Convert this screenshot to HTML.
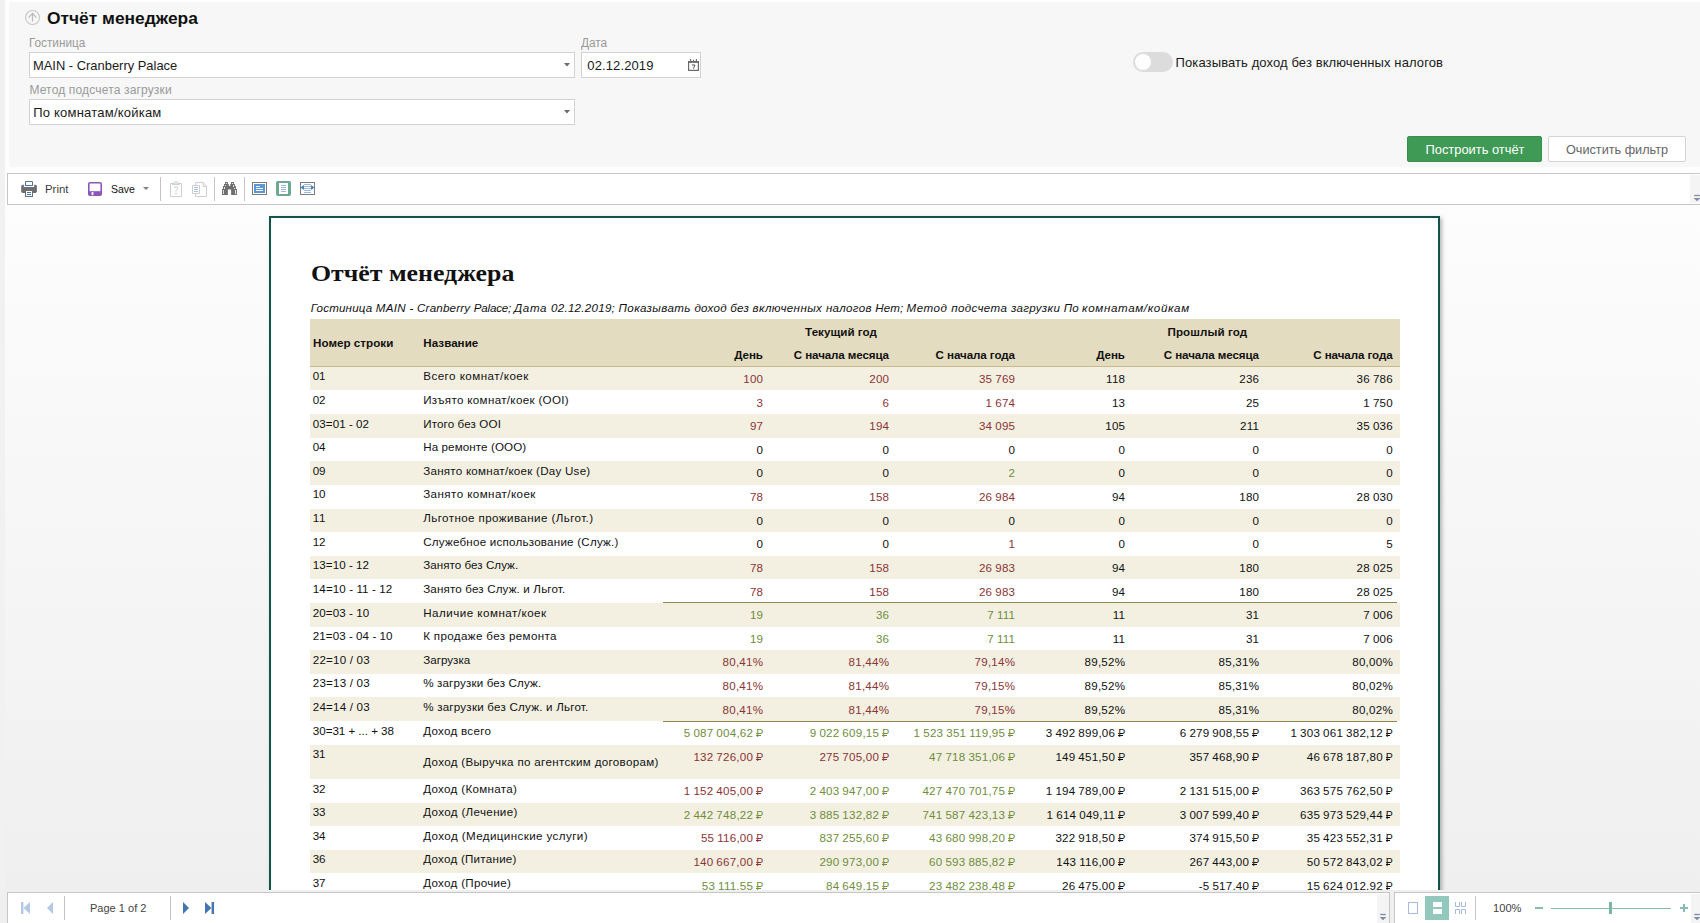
<!DOCTYPE html>
<html lang="ru"><head><meta charset="utf-8"><title>Отчёт менеджера</title>
<style>
html,body{margin:0;padding:0;}
body{width:1700px;height:923px;overflow:hidden;position:relative;background:#f1f1f1;font-family:"Liberation Sans",sans-serif;}
.t{position:absolute;white-space:nowrap;margin:0;padding:0;}
.b{position:absolute;box-sizing:border-box;}
svg{position:absolute;overflow:visible;}
.r{display:inline-block;position:relative;font-size:10.6px;line-height:16px;letter-spacing:0;word-spacing:0;}
.r::after{content:"";position:absolute;left:-0.2px;top:10px;width:4.8px;height:1px;background:currentColor;}
.r::before{content:"";position:absolute;left:-0.2px;top:8px;width:1.3px;height:1px;background:currentColor;opacity:.75;}
</style></head><body>

<div class="b" style="left:5px;top:0px;width:1695px;height:174px;background:#fefefe;"></div>
<div class="b" style="left:9px;top:2px;width:1691px;height:165px;background:#f7f7f7;border-radius:2px 0 0 3px;"></div>
<svg style="left:25px;top:10px" width="15" height="15" viewBox="0 0 15 15"><circle cx="7.5" cy="7.5" r="7" fill="none" stroke="#c6c6c6" stroke-width="1.1"/><path d="M7.5 11.6V3.4M3.6 7.6 7.5 3.4 11.4 7.6" fill="none" stroke="#b9b9b9" stroke-width="1.2"/></svg>
<div class="t" style="top:7px;font-size:17px;line-height:23px;color:#111;font-weight:700;left:46.6px;transform:scaleX(1.022);transform-origin:0 0;">Отчёт менеджера</div>
<div class="t" style="top:34px;font-size:12px;line-height:18px;color:#9a9a9a;left:29.4px;transform:scaleX(0.978);transform-origin:0 0;">Гостиница</div>
<div class="t" style="top:34px;font-size:12px;line-height:18px;color:#9a9a9a;left:581.2px;transform:scaleX(0.986);transform-origin:0 0;">Дата</div>
<div class="t" style="top:81px;font-size:12px;line-height:18px;color:#9a9a9a;letter-spacing:0.16px;left:29.4px;">Метод подсчета загрузки</div>
<div class="b" style="left:29px;top:52px;width:546px;height:26px;background:#fff;border:1px solid #d2d2d2;"></div>
<div class="b" style="left:581px;top:52px;width:120px;height:26px;background:#fff;border:1px solid #d2d2d2;"></div>
<div class="b" style="left:29px;top:99px;width:546px;height:26px;background:#fff;border:1px solid #d2d2d2;"></div>
<div class="t" style="top:56px;font-size:13px;line-height:19px;color:#1a1a1a;left:33.2px;transform:scaleX(0.993);transform-origin:0 0;">MAIN - Cranberry Palace</div>
<div class="t" style="top:103px;font-size:13px;line-height:19px;color:#1a1a1a;letter-spacing:0.22px;left:33.2px;">По комнатам/койкам</div>
<div class="t" style="top:56px;font-size:13px;line-height:19px;color:#1a1a1a;letter-spacing:0.12px;left:587.3px;">02.12.2019</div>
<svg style="left:564px;top:63px" width="6" height="4" viewBox="0 0 6 4"><path d="M0 0H6L3 3.6Z" fill="#6a6a6a"/></svg>
<svg style="left:564px;top:110px" width="6" height="4" viewBox="0 0 6 4"><path d="M0 0H6L3 3.6Z" fill="#6a6a6a"/></svg>
<svg style="left:688px;top:59px" width="11" height="12" viewBox="0 0 11 12"><path d="M.6 2.6H10.4V11.4H.6Z" fill="#fff" stroke="#6c6c6c" stroke-width="1.2"/><path d="M.6 3.2H10.4" stroke="#6c6c6c" stroke-width="1.4"/><path d="M2.6 0V2.6M5.5 .8V2.6M8.4 0V2.6" stroke="#6c6c6c" stroke-width="1.1"/><path d="M3.9 6H7L5.4 9.7" fill="none" stroke="#555" stroke-width="1"/></svg>
<div class="b" style="left:1133px;top:52px;width:40px;height:20px;background:#dcdcdc;border-radius:10px;"></div>
<div class="b" style="left:1135px;top:54px;width:16px;height:16px;background:#fdfdfd;border-radius:8px;"></div>
<div class="t" style="top:53px;font-size:13px;line-height:19px;color:#1a1a1a;letter-spacing:0.1px;left:1175.6px;">Показывать доход без включенных налогов</div>
<div class="b" style="left:1407px;top:136px;width:135px;height:26px;background:#3f9a55;border-radius:2px;border:1px solid #3a8f4e;"></div>
<div class="t" style="top:140px;font-size:13px;line-height:19px;color:#fff;left:1274.6px;width:400px;text-align:center;transform:scaleX(0.99);transform-origin:50% 0;">Построить отчёт</div>
<div class="b" style="left:1548px;top:136px;width:138px;height:26px;background:#fff;border-radius:2px;border:1px solid #d4d4d4;"></div>
<div class="t" style="top:140px;font-size:13px;line-height:19px;color:#666;left:1417px;width:400px;text-align:center;transform:scaleX(0.975);transform-origin:50% 0;">Очистить фильтр</div>
<div class="b" style="left:5px;top:173px;width:1695px;height:717px;background:linear-gradient(#fdfdfd,#fcfcfc 8%,#efefef 100%);"></div>
<div class="b" style="left:269px;top:216px;width:1171px;height:700px;background:#fff;border:2px solid #11544b;box-shadow:2px 2px 4px rgba(0,0,0,.28);"></div>
<div class="t" style="top:258px;font-size:23.2px;line-height:30px;color:#111;font-weight:700;font-family:'Liberation Serif',serif;left:311.4px;transform:scaleX(1.1144);transform-origin:0 0;">Отчёт менеджера</div>
<div class="t" style="top:299px;font-size:11.6px;line-height:17px;color:#111;font-style:italic;letter-spacing:0.16px;left:310.8px;">Гостиница</div>
<div class="t" style="top:299px;font-size:11.6px;line-height:17px;color:#111;font-style:italic;letter-spacing:0.335px;left:375.7px;">MAIN</div>
<div class="t" style="top:299px;font-size:11.6px;line-height:17px;color:#111;font-style:italic;letter-spacing:0.157px;left:409.6px;">-</div>
<div class="t" style="top:299px;font-size:11.6px;line-height:17px;color:#111;font-style:italic;letter-spacing:0.2px;left:417.0px;">Cranberry</div>
<div class="t" style="top:299px;font-size:11.6px;line-height:17px;color:#111;font-style:italic;letter-spacing:-0.214px;left:473.8px;">Palace;</div>
<div class="t" style="top:299px;font-size:11.6px;line-height:17px;color:#111;font-style:italic;letter-spacing:0.635px;left:514.0px;">Дата</div>
<div class="t" style="top:299px;font-size:11.6px;line-height:17px;color:#111;font-style:italic;letter-spacing:0.258px;left:551.0px;">02.12.2019;</div>
<div class="t" style="top:299px;font-size:11.6px;line-height:17px;color:#111;font-style:italic;letter-spacing:0.373px;left:618.6px;">Показывать</div>
<div class="t" style="top:299px;font-size:11.6px;line-height:17px;color:#111;font-style:italic;letter-spacing:0.256px;left:694.4px;">доход</div>
<div class="t" style="top:299px;font-size:11.6px;line-height:17px;color:#111;font-style:italic;letter-spacing:0.21px;left:730.3px;">без</div>
<div class="t" style="top:299px;font-size:11.6px;line-height:17px;color:#111;font-style:italic;letter-spacing:0.386px;left:752.6px;">включенных</div>
<div class="t" style="top:299px;font-size:11.6px;line-height:17px;color:#111;font-style:italic;letter-spacing:0.298px;left:825.9px;">налогов</div>
<div class="t" style="top:299px;font-size:11.6px;line-height:17px;color:#111;font-style:italic;letter-spacing:0.079px;left:875.3px;">Нет;</div>
<div class="t" style="top:299px;font-size:11.6px;line-height:17px;color:#111;font-style:italic;letter-spacing:0.516px;left:906.5px;">Метод</div>
<div class="t" style="top:299px;font-size:11.6px;line-height:17px;color:#111;font-style:italic;letter-spacing:0.39px;left:951.2px;">подсчета</div>
<div class="t" style="top:299px;font-size:11.6px;line-height:17px;color:#111;font-style:italic;letter-spacing:0.339px;left:1010.9px;">загрузки</div>
<div class="t" style="top:299px;font-size:11.6px;line-height:17px;color:#111;font-style:italic;letter-spacing:0.073px;left:1063.8px;">По</div>
<div class="t" style="top:299px;font-size:11.6px;line-height:17px;color:#111;font-style:italic;letter-spacing:0.64px;left:1082.1px;">комнатам/койкам</div>
<div class="b" style="left:310px;top:319px;width:1090px;height:48px;background:#e4dcc0;border-bottom:1px solid #c9ba8e;"></div>
<div class="t" style="top:334px;font-size:11.6px;line-height:17px;color:#111;font-weight:700;letter-spacing:0.037px;left:313px;">Номер строки</div>
<div class="t" style="top:334px;font-size:11.6px;line-height:17px;color:#111;font-weight:700;letter-spacing:0.035px;left:423.3px;">Название</div>
<div class="t" style="top:323px;font-size:11.6px;line-height:17px;color:#111;font-weight:700;letter-spacing:0.034px;left:641px;width:400px;text-align:center;">Текущий год</div>
<div class="t" style="top:323px;font-size:11.6px;line-height:17px;color:#111;font-weight:700;letter-spacing:0.072px;left:1007.3px;width:400px;text-align:center;">Прошлый год</div>
<div class="t" style="top:346px;font-size:11.6px;line-height:17px;color:#111;font-weight:700;letter-spacing:-0.098px;right:937.10px;text-align:right;">День</div>
<div class="t" style="top:346px;font-size:11.6px;line-height:17px;color:#111;font-weight:700;letter-spacing:-0.116px;right:811.12px;text-align:right;">С начала месяца</div>
<div class="t" style="top:346px;font-size:11.6px;line-height:17px;color:#111;font-weight:700;letter-spacing:-0.077px;right:685.08px;text-align:right;">С начала года</div>
<div class="t" style="top:346px;font-size:11.6px;line-height:17px;color:#111;font-weight:700;letter-spacing:-0.098px;right:575.10px;text-align:right;">День</div>
<div class="t" style="top:346px;font-size:11.6px;line-height:17px;color:#111;font-weight:700;letter-spacing:-0.116px;right:441.12px;text-align:right;">С начала месяца</div>
<div class="t" style="top:346px;font-size:11.6px;line-height:17px;color:#111;font-weight:700;letter-spacing:-0.077px;right:307.38px;text-align:right;">С начала года</div>
<div class="b" style="left:310px;top:367px;width:1090px;height:23px;background:#f3f0e2;"></div>
<div class="t" style="top:367px;font-size:11.6px;line-height:17px;color:#111;letter-spacing:-0.303px;left:312.8px;">01</div>
<div class="t" style="top:367px;font-size:11.6px;line-height:17px;color:#111;letter-spacing:0.475px;left:423.2px;">Всего комнат/коек</div>
<div class="t" style="top:370px;font-size:11.6px;line-height:17px;color:#8c3434;letter-spacing:0.22px;right:936.78px;text-align:right;">100</div>
<div class="t" style="top:370px;font-size:11.6px;line-height:17px;color:#8c3434;letter-spacing:0.22px;right:810.78px;text-align:right;">200</div>
<div class="t" style="top:370px;font-size:11.6px;line-height:17px;color:#8c3434;letter-spacing:0.22px;right:684.78px;text-align:right;word-spacing:-0.45px;">35 769</div>
<div class="t" style="top:370px;font-size:11.6px;line-height:17px;color:#111;letter-spacing:0.22px;right:574.78px;text-align:right;">118</div>
<div class="t" style="top:370px;font-size:11.6px;line-height:17px;color:#111;letter-spacing:0.22px;right:440.78px;text-align:right;">236</div>
<div class="t" style="top:370px;font-size:11.6px;line-height:17px;color:#111;letter-spacing:0.22px;right:307.08px;text-align:right;word-spacing:-0.45px;">36 786</div>
<div class="t" style="top:391px;font-size:11.6px;line-height:17px;color:#111;letter-spacing:-0.303px;left:312.8px;">02</div>
<div class="t" style="top:391px;font-size:11.6px;line-height:17px;color:#111;letter-spacing:0.332px;left:423.2px;">Изъято комнат/коек (OOI)</div>
<div class="t" style="top:394px;font-size:11.6px;line-height:17px;color:#8c3434;letter-spacing:0.22px;right:936.78px;text-align:right;">3</div>
<div class="t" style="top:394px;font-size:11.6px;line-height:17px;color:#8c3434;letter-spacing:0.22px;right:810.78px;text-align:right;">6</div>
<div class="t" style="top:394px;font-size:11.6px;line-height:17px;color:#8c3434;letter-spacing:0.22px;right:684.78px;text-align:right;word-spacing:-0.45px;">1 674</div>
<div class="t" style="top:394px;font-size:11.6px;line-height:17px;color:#111;letter-spacing:0.22px;right:574.78px;text-align:right;">13</div>
<div class="t" style="top:394px;font-size:11.6px;line-height:17px;color:#111;letter-spacing:0.22px;right:440.78px;text-align:right;">25</div>
<div class="t" style="top:394px;font-size:11.6px;line-height:17px;color:#111;letter-spacing:0.22px;right:307.08px;text-align:right;word-spacing:-0.45px;">1 750</div>
<div class="b" style="left:310px;top:414px;width:1090px;height:24px;background:#f3f0e2;"></div>
<div class="t" style="top:415px;font-size:11.6px;line-height:17px;color:#111;letter-spacing:0.056px;left:312.8px;">03=01 - 02</div>
<div class="t" style="top:415px;font-size:11.6px;line-height:17px;color:#111;letter-spacing:0.13px;left:423.2px;">Итого без OOI</div>
<div class="t" style="top:417px;font-size:11.6px;line-height:17px;color:#8c3434;letter-spacing:0.22px;right:936.78px;text-align:right;">97</div>
<div class="t" style="top:417px;font-size:11.6px;line-height:17px;color:#8c3434;letter-spacing:0.22px;right:810.78px;text-align:right;">194</div>
<div class="t" style="top:417px;font-size:11.6px;line-height:17px;color:#8c3434;letter-spacing:0.22px;right:684.78px;text-align:right;word-spacing:-0.45px;">34 095</div>
<div class="t" style="top:417px;font-size:11.6px;line-height:17px;color:#111;letter-spacing:0.22px;right:574.78px;text-align:right;">105</div>
<div class="t" style="top:417px;font-size:11.6px;line-height:17px;color:#111;letter-spacing:0.22px;right:440.78px;text-align:right;">211</div>
<div class="t" style="top:417px;font-size:11.6px;line-height:17px;color:#111;letter-spacing:0.22px;right:307.08px;text-align:right;word-spacing:-0.45px;">35 036</div>
<div class="t" style="top:438px;font-size:11.6px;line-height:17px;color:#111;letter-spacing:-0.303px;left:312.8px;">04</div>
<div class="t" style="top:438px;font-size:11.6px;line-height:17px;color:#111;letter-spacing:0.104px;left:423.2px;">На ремонте (OOO)</div>
<div class="t" style="top:441px;font-size:11.6px;line-height:17px;color:#111;letter-spacing:0.22px;right:936.78px;text-align:right;">0</div>
<div class="t" style="top:441px;font-size:11.6px;line-height:17px;color:#111;letter-spacing:0.22px;right:810.78px;text-align:right;">0</div>
<div class="t" style="top:441px;font-size:11.6px;line-height:17px;color:#111;letter-spacing:0.22px;right:684.78px;text-align:right;">0</div>
<div class="t" style="top:441px;font-size:11.6px;line-height:17px;color:#111;letter-spacing:0.22px;right:574.78px;text-align:right;">0</div>
<div class="t" style="top:441px;font-size:11.6px;line-height:17px;color:#111;letter-spacing:0.22px;right:440.78px;text-align:right;">0</div>
<div class="t" style="top:441px;font-size:11.6px;line-height:17px;color:#111;letter-spacing:0.22px;right:307.08px;text-align:right;">0</div>
<div class="b" style="left:310px;top:461px;width:1090px;height:24px;background:#f3f0e2;"></div>
<div class="t" style="top:462px;font-size:11.6px;line-height:17px;color:#111;letter-spacing:-0.303px;left:312.8px;">09</div>
<div class="t" style="top:462px;font-size:11.6px;line-height:17px;color:#111;letter-spacing:0.249px;left:423.2px;">Занято комнат/коек (Day Use)</div>
<div class="t" style="top:464px;font-size:11.6px;line-height:17px;color:#111;letter-spacing:0.22px;right:936.78px;text-align:right;">0</div>
<div class="t" style="top:464px;font-size:11.6px;line-height:17px;color:#111;letter-spacing:0.22px;right:810.78px;text-align:right;">0</div>
<div class="t" style="top:464px;font-size:11.6px;line-height:17px;color:#6f8d3c;letter-spacing:0.22px;right:684.78px;text-align:right;">2</div>
<div class="t" style="top:464px;font-size:11.6px;line-height:17px;color:#111;letter-spacing:0.22px;right:574.78px;text-align:right;">0</div>
<div class="t" style="top:464px;font-size:11.6px;line-height:17px;color:#111;letter-spacing:0.22px;right:440.78px;text-align:right;">0</div>
<div class="t" style="top:464px;font-size:11.6px;line-height:17px;color:#111;letter-spacing:0.22px;right:307.08px;text-align:right;">0</div>
<div class="t" style="top:485px;font-size:11.6px;line-height:17px;color:#111;letter-spacing:-0.303px;left:312.8px;">10</div>
<div class="t" style="top:485px;font-size:11.6px;line-height:17px;color:#111;letter-spacing:0.426px;left:423.2px;">Занято комнат/коек</div>
<div class="t" style="top:488px;font-size:11.6px;line-height:17px;color:#8c3434;letter-spacing:0.22px;right:936.78px;text-align:right;">78</div>
<div class="t" style="top:488px;font-size:11.6px;line-height:17px;color:#8c3434;letter-spacing:0.22px;right:810.78px;text-align:right;">158</div>
<div class="t" style="top:488px;font-size:11.6px;line-height:17px;color:#8c3434;letter-spacing:0.22px;right:684.78px;text-align:right;word-spacing:-0.45px;">26 984</div>
<div class="t" style="top:488px;font-size:11.6px;line-height:17px;color:#111;letter-spacing:0.22px;right:574.78px;text-align:right;">94</div>
<div class="t" style="top:488px;font-size:11.6px;line-height:17px;color:#111;letter-spacing:0.22px;right:440.78px;text-align:right;">180</div>
<div class="t" style="top:488px;font-size:11.6px;line-height:17px;color:#111;letter-spacing:0.22px;right:307.08px;text-align:right;word-spacing:-0.45px;">28 030</div>
<div class="b" style="left:310px;top:509px;width:1090px;height:23px;background:#f3f0e2;"></div>
<div class="t" style="top:509px;font-size:11.6px;line-height:17px;color:#111;letter-spacing:0.558px;left:312.8px;">11</div>
<div class="t" style="top:509px;font-size:11.6px;line-height:17px;color:#111;letter-spacing:0.414px;left:423.2px;">Льготное проживание (Льгот.)</div>
<div class="t" style="top:512px;font-size:11.6px;line-height:17px;color:#111;letter-spacing:0.22px;right:936.78px;text-align:right;">0</div>
<div class="t" style="top:512px;font-size:11.6px;line-height:17px;color:#111;letter-spacing:0.22px;right:810.78px;text-align:right;">0</div>
<div class="t" style="top:512px;font-size:11.6px;line-height:17px;color:#111;letter-spacing:0.22px;right:684.78px;text-align:right;">0</div>
<div class="t" style="top:512px;font-size:11.6px;line-height:17px;color:#111;letter-spacing:0.22px;right:574.78px;text-align:right;">0</div>
<div class="t" style="top:512px;font-size:11.6px;line-height:17px;color:#111;letter-spacing:0.22px;right:440.78px;text-align:right;">0</div>
<div class="t" style="top:512px;font-size:11.6px;line-height:17px;color:#111;letter-spacing:0.22px;right:307.08px;text-align:right;">0</div>
<div class="t" style="top:533px;font-size:11.6px;line-height:17px;color:#111;letter-spacing:-0.303px;left:312.8px;">12</div>
<div class="t" style="top:533px;font-size:11.6px;line-height:17px;color:#111;letter-spacing:0.231px;left:423.2px;">Служебное использование (Служ.)</div>
<div class="t" style="top:535px;font-size:11.6px;line-height:17px;color:#111;letter-spacing:0.22px;right:936.78px;text-align:right;">0</div>
<div class="t" style="top:535px;font-size:11.6px;line-height:17px;color:#111;letter-spacing:0.22px;right:810.78px;text-align:right;">0</div>
<div class="t" style="top:535px;font-size:11.6px;line-height:17px;color:#8c3434;letter-spacing:0.22px;right:684.78px;text-align:right;">1</div>
<div class="t" style="top:535px;font-size:11.6px;line-height:17px;color:#111;letter-spacing:0.22px;right:574.78px;text-align:right;">0</div>
<div class="t" style="top:535px;font-size:11.6px;line-height:17px;color:#111;letter-spacing:0.22px;right:440.78px;text-align:right;">0</div>
<div class="t" style="top:535px;font-size:11.6px;line-height:17px;color:#111;letter-spacing:0.22px;right:307.08px;text-align:right;">5</div>
<div class="b" style="left:310px;top:556px;width:1090px;height:23px;background:#f3f0e2;"></div>
<div class="t" style="top:556px;font-size:11.6px;line-height:17px;color:#111;letter-spacing:0.056px;left:312.8px;">13=10 - 12</div>
<div class="t" style="top:556px;font-size:11.6px;line-height:17px;color:#111;letter-spacing:0.046px;left:423.2px;">Занято без Служ.</div>
<div class="t" style="top:559px;font-size:11.6px;line-height:17px;color:#8c3434;letter-spacing:0.22px;right:936.78px;text-align:right;">78</div>
<div class="t" style="top:559px;font-size:11.6px;line-height:17px;color:#8c3434;letter-spacing:0.22px;right:810.78px;text-align:right;">158</div>
<div class="t" style="top:559px;font-size:11.6px;line-height:17px;color:#8c3434;letter-spacing:0.22px;right:684.78px;text-align:right;word-spacing:-0.45px;">26 983</div>
<div class="t" style="top:559px;font-size:11.6px;line-height:17px;color:#111;letter-spacing:0.22px;right:574.78px;text-align:right;">94</div>
<div class="t" style="top:559px;font-size:11.6px;line-height:17px;color:#111;letter-spacing:0.22px;right:440.78px;text-align:right;">180</div>
<div class="t" style="top:559px;font-size:11.6px;line-height:17px;color:#111;letter-spacing:0.22px;right:307.08px;text-align:right;word-spacing:-0.45px;">28 025</div>
<div class="t" style="top:580px;font-size:11.6px;line-height:17px;color:#111;letter-spacing:0.097px;left:312.8px;">14=10 - 11 - 12</div>
<div class="t" style="top:580px;font-size:11.6px;line-height:17px;color:#111;letter-spacing:0.158px;left:423.2px;">Занято без Служ. и Льгот.</div>
<div class="t" style="top:583px;font-size:11.6px;line-height:17px;color:#8c3434;letter-spacing:0.22px;right:936.78px;text-align:right;">78</div>
<div class="t" style="top:583px;font-size:11.6px;line-height:17px;color:#8c3434;letter-spacing:0.22px;right:810.78px;text-align:right;">158</div>
<div class="t" style="top:583px;font-size:11.6px;line-height:17px;color:#8c3434;letter-spacing:0.22px;right:684.78px;text-align:right;word-spacing:-0.45px;">26 983</div>
<div class="t" style="top:583px;font-size:11.6px;line-height:17px;color:#111;letter-spacing:0.22px;right:574.78px;text-align:right;">94</div>
<div class="t" style="top:583px;font-size:11.6px;line-height:17px;color:#111;letter-spacing:0.22px;right:440.78px;text-align:right;">180</div>
<div class="t" style="top:583px;font-size:11.6px;line-height:17px;color:#111;letter-spacing:0.22px;right:307.08px;text-align:right;word-spacing:-0.45px;">28 025</div>
<div class="b" style="left:310px;top:603px;width:1090px;height:24px;background:#f3f0e2;"></div>
<div class="t" style="top:604px;font-size:11.6px;line-height:17px;color:#111;letter-spacing:0.068px;left:312.8px;">20=03 - 10</div>
<div class="t" style="top:604px;font-size:11.6px;line-height:17px;color:#111;letter-spacing:0.487px;left:423.2px;">Наличие комнат/коек</div>
<div class="t" style="top:606px;font-size:11.6px;line-height:17px;color:#6f8d3c;letter-spacing:0.22px;right:936.78px;text-align:right;">19</div>
<div class="t" style="top:606px;font-size:11.6px;line-height:17px;color:#6f8d3c;letter-spacing:0.22px;right:810.78px;text-align:right;">36</div>
<div class="t" style="top:606px;font-size:11.6px;line-height:17px;color:#6f8d3c;letter-spacing:0.22px;right:684.78px;text-align:right;word-spacing:-0.45px;">7 111</div>
<div class="t" style="top:606px;font-size:11.6px;line-height:17px;color:#111;letter-spacing:0.22px;right:574.78px;text-align:right;">11</div>
<div class="t" style="top:606px;font-size:11.6px;line-height:17px;color:#111;letter-spacing:0.22px;right:440.78px;text-align:right;">31</div>
<div class="t" style="top:606px;font-size:11.6px;line-height:17px;color:#111;letter-spacing:0.22px;right:307.08px;text-align:right;word-spacing:-0.45px;">7 006</div>
<div class="b" style="left:663px;top:602px;width:733.5px;height:1px;background:#8f8750;"></div>
<div class="t" style="top:627px;font-size:11.6px;line-height:17px;color:#111;letter-spacing:0.057px;left:312.8px;">21=03 - 04 - 10</div>
<div class="t" style="top:627px;font-size:11.6px;line-height:17px;color:#111;letter-spacing:0.356px;left:423.2px;">К продаже без ремонта</div>
<div class="t" style="top:630px;font-size:11.6px;line-height:17px;color:#6f8d3c;letter-spacing:0.22px;right:936.78px;text-align:right;">19</div>
<div class="t" style="top:630px;font-size:11.6px;line-height:17px;color:#6f8d3c;letter-spacing:0.22px;right:810.78px;text-align:right;">36</div>
<div class="t" style="top:630px;font-size:11.6px;line-height:17px;color:#6f8d3c;letter-spacing:0.22px;right:684.78px;text-align:right;word-spacing:-0.45px;">7 111</div>
<div class="t" style="top:630px;font-size:11.6px;line-height:17px;color:#111;letter-spacing:0.22px;right:574.78px;text-align:right;">11</div>
<div class="t" style="top:630px;font-size:11.6px;line-height:17px;color:#111;letter-spacing:0.22px;right:440.78px;text-align:right;">31</div>
<div class="t" style="top:630px;font-size:11.6px;line-height:17px;color:#111;letter-spacing:0.22px;right:307.08px;text-align:right;word-spacing:-0.45px;">7 006</div>
<div class="b" style="left:310px;top:650px;width:1090px;height:24px;background:#f3f0e2;"></div>
<div class="t" style="top:651px;font-size:11.6px;line-height:17px;color:#111;letter-spacing:0.194px;left:312.8px;">22=10 / 03</div>
<div class="t" style="top:651px;font-size:11.6px;line-height:17px;color:#111;letter-spacing:0.027px;left:423.2px;">Загрузка</div>
<div class="t" style="top:653px;font-size:11.6px;line-height:17px;color:#8c3434;letter-spacing:0.22px;right:936.78px;text-align:right;">80,41%</div>
<div class="t" style="top:653px;font-size:11.6px;line-height:17px;color:#8c3434;letter-spacing:0.22px;right:810.78px;text-align:right;">81,44%</div>
<div class="t" style="top:653px;font-size:11.6px;line-height:17px;color:#8c3434;letter-spacing:0.22px;right:684.78px;text-align:right;">79,14%</div>
<div class="t" style="top:653px;font-size:11.6px;line-height:17px;color:#111;letter-spacing:0.22px;right:574.78px;text-align:right;">89,52%</div>
<div class="t" style="top:653px;font-size:11.6px;line-height:17px;color:#111;letter-spacing:0.22px;right:440.78px;text-align:right;">85,31%</div>
<div class="t" style="top:653px;font-size:11.6px;line-height:17px;color:#111;letter-spacing:0.22px;right:307.08px;text-align:right;">80,00%</div>
<div class="t" style="top:674px;font-size:11.6px;line-height:17px;color:#111;letter-spacing:0.194px;left:312.8px;">23=13 / 03</div>
<div class="t" style="top:674px;font-size:11.6px;line-height:17px;color:#111;letter-spacing:0.16px;left:423.2px;">% загрузки без Служ.</div>
<div class="t" style="top:677px;font-size:11.6px;line-height:17px;color:#8c3434;letter-spacing:0.22px;right:936.78px;text-align:right;">80,41%</div>
<div class="t" style="top:677px;font-size:11.6px;line-height:17px;color:#8c3434;letter-spacing:0.22px;right:810.78px;text-align:right;">81,44%</div>
<div class="t" style="top:677px;font-size:11.6px;line-height:17px;color:#8c3434;letter-spacing:0.22px;right:684.78px;text-align:right;">79,15%</div>
<div class="t" style="top:677px;font-size:11.6px;line-height:17px;color:#111;letter-spacing:0.22px;right:574.78px;text-align:right;">89,52%</div>
<div class="t" style="top:677px;font-size:11.6px;line-height:17px;color:#111;letter-spacing:0.22px;right:440.78px;text-align:right;">85,31%</div>
<div class="t" style="top:677px;font-size:11.6px;line-height:17px;color:#111;letter-spacing:0.22px;right:307.08px;text-align:right;">80,02%</div>
<div class="b" style="left:310px;top:697px;width:1090px;height:24px;background:#f3f0e2;"></div>
<div class="t" style="top:698px;font-size:11.6px;line-height:17px;color:#111;letter-spacing:0.194px;left:312.8px;">24=14 / 03</div>
<div class="t" style="top:698px;font-size:11.6px;line-height:17px;color:#111;letter-spacing:0.219px;left:423.2px;">% загрузки без Служ. и Льгот.</div>
<div class="t" style="top:701px;font-size:11.6px;line-height:17px;color:#8c3434;letter-spacing:0.22px;right:936.78px;text-align:right;">80,41%</div>
<div class="t" style="top:701px;font-size:11.6px;line-height:17px;color:#8c3434;letter-spacing:0.22px;right:810.78px;text-align:right;">81,44%</div>
<div class="t" style="top:701px;font-size:11.6px;line-height:17px;color:#8c3434;letter-spacing:0.22px;right:684.78px;text-align:right;">79,15%</div>
<div class="t" style="top:701px;font-size:11.6px;line-height:17px;color:#111;letter-spacing:0.22px;right:574.78px;text-align:right;">89,52%</div>
<div class="t" style="top:701px;font-size:11.6px;line-height:17px;color:#111;letter-spacing:0.22px;right:440.78px;text-align:right;">85,31%</div>
<div class="t" style="top:701px;font-size:11.6px;line-height:17px;color:#111;letter-spacing:0.22px;right:307.08px;text-align:right;">80,02%</div>
<div class="t" style="top:722px;font-size:11.6px;line-height:17px;color:#111;letter-spacing:-0.026px;left:312.8px;">30=31 + ... + 38</div>
<div class="t" style="top:722px;font-size:11.6px;line-height:17px;color:#111;letter-spacing:0.282px;left:423.2px;">Доход всего</div>
<div class="t" style="top:724px;font-size:11.6px;line-height:17px;color:#6f8d3c;letter-spacing:0.22px;right:936.78px;text-align:right;word-spacing:-0.45px;">5 087 004,62 <span class="r">P</span></div>
<div class="t" style="top:724px;font-size:11.6px;line-height:17px;color:#6f8d3c;letter-spacing:0.22px;right:810.78px;text-align:right;word-spacing:-0.45px;">9 022 609,15 <span class="r">P</span></div>
<div class="t" style="top:724px;font-size:11.6px;line-height:17px;color:#6f8d3c;letter-spacing:0.22px;right:684.78px;text-align:right;word-spacing:-0.45px;">1 523 351 119,95 <span class="r">P</span></div>
<div class="t" style="top:724px;font-size:11.6px;line-height:17px;color:#111;letter-spacing:0.22px;right:574.78px;text-align:right;word-spacing:-0.45px;">3 492 899,06 <span class="r">P</span></div>
<div class="t" style="top:724px;font-size:11.6px;line-height:17px;color:#111;letter-spacing:0.22px;right:440.78px;text-align:right;word-spacing:-0.45px;">6 279 908,55 <span class="r">P</span></div>
<div class="t" style="top:724px;font-size:11.6px;line-height:17px;color:#111;letter-spacing:0.22px;right:307.08px;text-align:right;word-spacing:-0.45px;">1 303 061 382,12 <span class="r">P</span></div>
<div class="b" style="left:663px;top:721px;width:733.5px;height:1px;background:#8f8750;"></div>
<div class="b" style="left:310px;top:745px;width:1090px;height:34px;background:#f3f0e2;"></div>
<div class="t" style="top:745px;font-size:11.6px;line-height:17px;color:#111;letter-spacing:-0.303px;left:312.8px;">31</div>
<div class="t" style="top:753px;font-size:11.6px;line-height:17px;color:#111;letter-spacing:0.332px;left:423.2px;">Доход (Выручка по агентским договорам)</div>
<div class="t" style="top:748px;font-size:11.6px;line-height:17px;color:#8c3434;letter-spacing:0.22px;right:936.78px;text-align:right;word-spacing:-0.45px;">132 726,00 <span class="r">P</span></div>
<div class="t" style="top:748px;font-size:11.6px;line-height:17px;color:#8c3434;letter-spacing:0.22px;right:810.78px;text-align:right;word-spacing:-0.45px;">275 705,00 <span class="r">P</span></div>
<div class="t" style="top:748px;font-size:11.6px;line-height:17px;color:#6f8d3c;letter-spacing:0.22px;right:684.78px;text-align:right;word-spacing:-0.45px;">47 718 351,06 <span class="r">P</span></div>
<div class="t" style="top:748px;font-size:11.6px;line-height:17px;color:#111;letter-spacing:0.22px;right:574.78px;text-align:right;word-spacing:-0.45px;">149 451,50 <span class="r">P</span></div>
<div class="t" style="top:748px;font-size:11.6px;line-height:17px;color:#111;letter-spacing:0.22px;right:440.78px;text-align:right;word-spacing:-0.45px;">357 468,90 <span class="r">P</span></div>
<div class="t" style="top:748px;font-size:11.6px;line-height:17px;color:#111;letter-spacing:0.22px;right:307.08px;text-align:right;word-spacing:-0.45px;">46 678 187,80 <span class="r">P</span></div>
<div class="t" style="top:780px;font-size:11.6px;line-height:17px;color:#111;letter-spacing:-0.303px;left:312.8px;">32</div>
<div class="t" style="top:780px;font-size:11.6px;line-height:17px;color:#111;letter-spacing:0.313px;left:423.2px;">Доход (Комната)</div>
<div class="t" style="top:782px;font-size:11.6px;line-height:17px;color:#8c3434;letter-spacing:0.22px;right:936.78px;text-align:right;word-spacing:-0.45px;">1 152 405,00 <span class="r">P</span></div>
<div class="t" style="top:782px;font-size:11.6px;line-height:17px;color:#6f8d3c;letter-spacing:0.22px;right:810.78px;text-align:right;word-spacing:-0.45px;">2 403 947,00 <span class="r">P</span></div>
<div class="t" style="top:782px;font-size:11.6px;line-height:17px;color:#6f8d3c;letter-spacing:0.22px;right:684.78px;text-align:right;word-spacing:-0.45px;">427 470 701,75 <span class="r">P</span></div>
<div class="t" style="top:782px;font-size:11.6px;line-height:17px;color:#111;letter-spacing:0.22px;right:574.78px;text-align:right;word-spacing:-0.45px;">1 194 789,00 <span class="r">P</span></div>
<div class="t" style="top:782px;font-size:11.6px;line-height:17px;color:#111;letter-spacing:0.22px;right:440.78px;text-align:right;word-spacing:-0.45px;">2 131 515,00 <span class="r">P</span></div>
<div class="t" style="top:782px;font-size:11.6px;line-height:17px;color:#111;letter-spacing:0.22px;right:307.08px;text-align:right;word-spacing:-0.45px;">363 575 762,50 <span class="r">P</span></div>
<div class="b" style="left:310px;top:803px;width:1090px;height:23px;background:#f3f0e2;"></div>
<div class="t" style="top:803px;font-size:11.6px;line-height:17px;color:#111;letter-spacing:-0.303px;left:312.8px;">33</div>
<div class="t" style="top:803px;font-size:11.6px;line-height:17px;color:#111;letter-spacing:0.343px;left:423.2px;">Доход (Лечение)</div>
<div class="t" style="top:806px;font-size:11.6px;line-height:17px;color:#6f8d3c;letter-spacing:0.22px;right:936.78px;text-align:right;word-spacing:-0.45px;">2 442 748,22 <span class="r">P</span></div>
<div class="t" style="top:806px;font-size:11.6px;line-height:17px;color:#6f8d3c;letter-spacing:0.22px;right:810.78px;text-align:right;word-spacing:-0.45px;">3 885 132,82 <span class="r">P</span></div>
<div class="t" style="top:806px;font-size:11.6px;line-height:17px;color:#6f8d3c;letter-spacing:0.22px;right:684.78px;text-align:right;word-spacing:-0.45px;">741 587 423,13 <span class="r">P</span></div>
<div class="t" style="top:806px;font-size:11.6px;line-height:17px;color:#111;letter-spacing:0.22px;right:574.78px;text-align:right;word-spacing:-0.45px;">1 614 049,11 <span class="r">P</span></div>
<div class="t" style="top:806px;font-size:11.6px;line-height:17px;color:#111;letter-spacing:0.22px;right:440.78px;text-align:right;word-spacing:-0.45px;">3 007 599,40 <span class="r">P</span></div>
<div class="t" style="top:806px;font-size:11.6px;line-height:17px;color:#111;letter-spacing:0.22px;right:307.08px;text-align:right;word-spacing:-0.45px;">635 973 529,44 <span class="r">P</span></div>
<div class="t" style="top:827px;font-size:11.6px;line-height:17px;color:#111;letter-spacing:-0.303px;left:312.8px;">34</div>
<div class="t" style="top:827px;font-size:11.6px;line-height:17px;color:#111;letter-spacing:0.398px;left:423.2px;">Доход (Медицинские услуги)</div>
<div class="t" style="top:829px;font-size:11.6px;line-height:17px;color:#8c3434;letter-spacing:0.22px;right:936.78px;text-align:right;word-spacing:-0.45px;">55 116,00 <span class="r">P</span></div>
<div class="t" style="top:829px;font-size:11.6px;line-height:17px;color:#6f8d3c;letter-spacing:0.22px;right:810.78px;text-align:right;word-spacing:-0.45px;">837 255,60 <span class="r">P</span></div>
<div class="t" style="top:829px;font-size:11.6px;line-height:17px;color:#6f8d3c;letter-spacing:0.22px;right:684.78px;text-align:right;word-spacing:-0.45px;">43 680 998,20 <span class="r">P</span></div>
<div class="t" style="top:829px;font-size:11.6px;line-height:17px;color:#111;letter-spacing:0.22px;right:574.78px;text-align:right;word-spacing:-0.45px;">322 918,50 <span class="r">P</span></div>
<div class="t" style="top:829px;font-size:11.6px;line-height:17px;color:#111;letter-spacing:0.22px;right:440.78px;text-align:right;word-spacing:-0.45px;">374 915,50 <span class="r">P</span></div>
<div class="t" style="top:829px;font-size:11.6px;line-height:17px;color:#111;letter-spacing:0.22px;right:307.08px;text-align:right;word-spacing:-0.45px;">35 423 552,31 <span class="r">P</span></div>
<div class="b" style="left:310px;top:850px;width:1090px;height:23px;background:#f3f0e2;"></div>
<div class="t" style="top:850px;font-size:11.6px;line-height:17px;color:#111;letter-spacing:-0.303px;left:312.8px;">36</div>
<div class="t" style="top:850px;font-size:11.6px;line-height:17px;color:#111;letter-spacing:0.258px;left:423.2px;">Доход (Питание)</div>
<div class="t" style="top:853px;font-size:11.6px;line-height:17px;color:#8c3434;letter-spacing:0.22px;right:936.78px;text-align:right;word-spacing:-0.45px;">140 667,00 <span class="r">P</span></div>
<div class="t" style="top:853px;font-size:11.6px;line-height:17px;color:#6f8d3c;letter-spacing:0.22px;right:810.78px;text-align:right;word-spacing:-0.45px;">290 973,00 <span class="r">P</span></div>
<div class="t" style="top:853px;font-size:11.6px;line-height:17px;color:#6f8d3c;letter-spacing:0.22px;right:684.78px;text-align:right;word-spacing:-0.45px;">60 593 885,82 <span class="r">P</span></div>
<div class="t" style="top:853px;font-size:11.6px;line-height:17px;color:#111;letter-spacing:0.22px;right:574.78px;text-align:right;word-spacing:-0.45px;">143 116,00 <span class="r">P</span></div>
<div class="t" style="top:853px;font-size:11.6px;line-height:17px;color:#111;letter-spacing:0.22px;right:440.78px;text-align:right;word-spacing:-0.45px;">267 443,00 <span class="r">P</span></div>
<div class="t" style="top:853px;font-size:11.6px;line-height:17px;color:#111;letter-spacing:0.22px;right:307.08px;text-align:right;word-spacing:-0.45px;">50 572 843,02 <span class="r">P</span></div>
<div class="t" style="top:874px;font-size:11.6px;line-height:17px;color:#111;letter-spacing:-0.303px;left:312.8px;">37</div>
<div class="t" style="top:874px;font-size:11.6px;line-height:17px;color:#111;letter-spacing:0.304px;left:423.2px;">Доход (Прочие)</div>
<div class="t" style="top:877px;font-size:11.6px;line-height:17px;color:#6f8d3c;letter-spacing:0.22px;right:936.78px;text-align:right;word-spacing:-0.45px;">53 111,55 <span class="r">P</span></div>
<div class="t" style="top:877px;font-size:11.6px;line-height:17px;color:#6f8d3c;letter-spacing:0.22px;right:810.78px;text-align:right;word-spacing:-0.45px;">84 649,15 <span class="r">P</span></div>
<div class="t" style="top:877px;font-size:11.6px;line-height:17px;color:#6f8d3c;letter-spacing:0.22px;right:684.78px;text-align:right;word-spacing:-0.45px;">23 482 238,48 <span class="r">P</span></div>
<div class="t" style="top:877px;font-size:11.6px;line-height:17px;color:#111;letter-spacing:0.22px;right:574.78px;text-align:right;word-spacing:-0.45px;">26 475,00 <span class="r">P</span></div>
<div class="t" style="top:877px;font-size:11.6px;line-height:17px;color:#111;letter-spacing:0.22px;right:440.78px;text-align:right;word-spacing:-0.45px;">-5 517,40 <span class="r">P</span></div>
<div class="t" style="top:877px;font-size:11.6px;line-height:17px;color:#111;letter-spacing:0.22px;right:307.08px;text-align:right;word-spacing:-0.45px;">15 624 012,92 <span class="r">P</span></div>
<div class="b" style="left:7px;top:173px;width:1693px;height:32px;background:#fff;border:1px solid #c6c6c6;border-right:none;"></div>
<div class="b" style="left:1690px;top:175px;width:10px;height:28px;background:#f4f4f4;"></div>
<svg style="left:1693.5px;top:194px" width="6" height="7" viewBox="0 0 6 7"><path d="M.2 1.5H5.8" stroke="#7d8ba6" stroke-width="1.3"/><path d="M-.3 4H6.3L3 7.2Z" fill="#7d8ba6"/></svg>
<svg style="left:21px;top:181px" width="16" height="16" viewBox="0 0 16 16">
<path d="M1.7 3.8H14.3Q15.9 3.8 15.9 5.4V10.3Q15.9 11.9 14.3 11.9H1.7Q.2 11.9 .2 10.3V5.4Q.2 3.8 1.7 3.8Z" fill="#6e6e6e"/>
<rect x="2.9" y="3" width="10.2" height="3" fill="#fff"/>
<path d="M4.5 4.4V.5H11.5V4.4" fill="#fff" stroke="#6e6e6e" stroke-width="1"/>
<path d="M4 4.5H12" stroke="#3f78bd" stroke-width="1"/>
<rect x="4.5" y="9.5" width="7" height="6" fill="#fff" stroke="#6e6e6e" stroke-width="1"/>
<path d="M6 11.5H10M6 13.5H10" stroke="#3f78bd" stroke-width="1"/>
</svg>
<div class="t" style="top:180px;font-size:11.6px;line-height:17px;color:#3c3c3c;left:45.3px;transform:scaleX(0.985);transform-origin:0 0;">Print</div>
<svg style="left:88px;top:182px" width="14" height="14" viewBox="0 0 14 14">
<rect x=".8" y=".8" width="12.4" height="12.4" rx="1.2" fill="#fff" stroke="#8e55b8" stroke-width="1.6"/>
<rect x=".8" y="9.2" width="12.4" height="4" fill="#8e55b8"/>
<rect x="3.6" y="10" width="1.8" height="3.2" fill="#fff"/>
</svg>
<div class="t" style="top:180px;font-size:11.6px;line-height:17px;color:#111;left:110.6px;transform:scaleX(0.905);transform-origin:0 0;">Save</div>
<svg style="left:143px;top:187px" width="6" height="3" viewBox="0 0 6 3"><path d="M0 0H6L3 3Z" fill="#808080"/></svg>
<div class="b" style="left:160px;top:177px;width:1px;height:24px;background:#c4c4c4;"></div>
<div class="b" style="left:214px;top:177px;width:1px;height:24px;background:#c4c4c4;"></div>
<div class="b" style="left:244px;top:177px;width:1px;height:24px;background:#c4c4c4;"></div>
<svg style="left:170px;top:181px" width="12" height="16" viewBox="0 0 12 16">
<path d="M.5 2.5H11.5V15.5H.5Z" fill="#fff" stroke="#cfcfcf" stroke-width="1"/>
<path d="M3.7 2.5Q3.9 .5 6 .5Q8.1 .5 8.3 2.5" fill="#fff" stroke="#cfcfcf" stroke-width="1"/>
<path d="M2.2 3.3H9.8" stroke="#cfcfcf" stroke-width="1.4"/>
<path d="M4.3 7.2Q4.6 5.7 6.1 5.7Q7.7 5.7 7.7 7.2Q7.7 8.2 6.4 9.2Q5.8 9.7 5.8 10.6M5 12.4H7" fill="none" stroke="#b9cde8" stroke-width="1"/>
</svg>
<svg style="left:192px;top:182px" width="15" height="15" viewBox="0 0 15 15">
<path d="M3.5 .5H11.2L14.5 4.2V14.5H3.5Z" fill="#fff" stroke="#cfcfcf" stroke-width="1"/>
<path d="M11.2 .5V4.5H14.5" fill="none" stroke="#cfcfcf" stroke-width="1"/>
<path d="M.5 3.5H7.5V11.5H.5Z" fill="#fff" stroke="#cfcfcf" stroke-width="1"/>
<path d="M2 5.5H6M2 7.5H6M2 9.5H6" stroke="#a9c0e0" stroke-width="1.1"/>
</svg>
<svg style="left:222px;top:182px" width="15" height="13" viewBox="0 0 15 13">
<path d="M3 0H5.9V2H6.8V4.1H8.2V2H9.1V0H11.9V2H12.9V4H13.9V7H14.9V13H9.1V7.5H5.9V13H0V7H1V4H2V2H3Z" fill="#6e6e6e"/>
<path d="M3.9 .9H4.9V1.9H3.9ZM3 3H4V4H3ZM2 5H3V7H2ZM.9 8H1.9V12H.9ZM10 .9H11V1.9H10ZM11 3H12V5H11ZM12 6H13V7H12ZM13 8H14V12H13Z" fill="#e4e4e4"/>
</svg>
<svg style="left:252px;top:182px" width="15" height="13" viewBox="0 0 15 13">
<rect x=".5" y=".5" width="14" height="12" fill="#fff" stroke="#7a7a7a" stroke-width="1"/>
<rect x="2" y="2" width="11" height="9" fill="#5b96d8"/>
<path d="M4 4.5H8M4 6.5H11M4 8.5H11" stroke="#fff" stroke-width="1"/>
</svg>
<svg style="left:276px;top:181px" width="15" height="15" viewBox="0 0 15 15">
<rect x="0" y="0" width="15" height="15" rx="2" fill="#6ea891"/>
<rect x="3" y="2" width="9" height="11" fill="#fff"/>
<path d="M5 4.5H10M5 6.5H10M5 8.5H10M5 10.5H10" stroke="#9db8dc" stroke-width="1"/>
</svg>
<svg style="left:300px;top:182px" width="15" height="13" viewBox="0 0 15 13">
<rect x=".5" y=".5" width="14" height="12" fill="#fff" stroke="#7d7d7d" stroke-width="1"/>
<path d="M4 2.5H11M3.6 4.5H11.4M3.6 6.5H11.4M4 8.5H11M4 10.5H11" stroke="#9db8dc" stroke-width="1"/>
<path d="M.7 5.4L3.9 2.9V7.9ZM14.3 5.4L11.1 2.9V7.9Z" fill="#3d79bd"/>
</svg>
<div class="b" style="left:0px;top:890px;width:1700px;height:33px;background:#efefef;"></div>
<div class="b" style="left:7px;top:892px;width:1383px;height:32px;background:#fff;border:1px solid #c6c6c6;"></div>
<div class="b" style="left:1377px;top:894px;width:12px;height:29px;background:#f4f4f4;"></div>
<svg style="left:1380px;top:913.3px" width="6" height="7" viewBox="0 0 6 7"><path d="M.2 1.5H5.8" stroke="#7d8ba6" stroke-width="1.3"/><path d="M-.3 4H6.3L3 7.2Z" fill="#7d8ba6"/></svg>
<div class="b" style="left:1394px;top:892px;width:307px;height:32px;background:#fff;border:1px solid #c6c6c6;"></div>
<div class="b" style="left:1691px;top:894px;width:9px;height:29px;background:#f4f4f4;"></div>
<svg style="left:1693.5px;top:913.3px" width="6" height="7" viewBox="0 0 6 7"><path d="M.2 1.5H5.8" stroke="#7d8ba6" stroke-width="1.3"/><path d="M-.3 4H6.3L3 7.2Z" fill="#7d8ba6"/></svg>
<svg style="left:21px;top:902px" width="9" height="12" viewBox="0 0 9 12"><path d="M0 0H2.4V12H0Z M9 0V12L2.6 6Z" fill="#b3c8e2"/></svg>
<svg style="left:47px;top:902px" width="6" height="12" viewBox="0 0 6 12"><path d="M6 0V12L0 6Z" fill="#b3c8e2"/></svg>
<div class="b" style="left:64px;top:896px;width:1px;height:24px;background:#c4c4c4;"></div>
<div class="t" style="top:900px;font-size:11.4px;line-height:16px;color:#444;left:89.6px;transform:scaleX(0.968);transform-origin:0 0;">Page 1 of 2</div>
<div class="b" style="left:170px;top:896px;width:1px;height:24px;background:#c4c4c4;"></div>
<svg style="left:183px;top:902px" width="6" height="12" viewBox="0 0 6 12"><path d="M0 0V12L6 6Z" fill="#4176b3"/></svg>
<svg style="left:205px;top:902px" width="9" height="12" viewBox="0 0 9 12"><path d="M6.6 0H9V12H6.6Z M0 0V12L6.4 6Z" fill="#4176b3"/></svg>
<div class="b" style="left:1408px;top:902px;width:10px;height:12px;background:#fff;border:1px solid #a9b9dc;"></div>
<div class="b" style="left:1425px;top:896px;width:24px;height:24px;background:#93c8bc;"></div>
<div class="b" style="left:1432.5px;top:902px;width:9px;height:5px;background:#fff;"></div>
<div class="b" style="left:1432.5px;top:909px;width:9px;height:5px;background:#fff;"></div>
<svg style="left:1455px;top:902px" width="11" height="12" viewBox="0 0 11 12"><path d="M.5 0V4.5H4.5V0M6.5 0V4.5H10.5V0M.5 12V7.5H4.5V12M6.5 12V7.5H10.5V12" fill="none" stroke="#a9b9dc" stroke-width="1"/></svg>
<div class="b" style="left:1475px;top:896px;width:1px;height:24px;background:#c4c4c4;"></div>
<div class="t" style="top:900px;font-size:11.4px;line-height:16px;color:#444;left:1492.9px;transform:scaleX(0.98);transform-origin:0 0;">100%</div>
<div class="b" style="left:1535px;top:907px;width:8px;height:2px;background:#86bdb0;"></div>
<div class="b" style="left:1551px;top:908px;width:120px;height:1px;background:#86bdb0;"></div>
<div class="b" style="left:1609px;top:902px;width:3px;height:12px;background:#7ab5a7;"></div>
<div class="b" style="left:1680px;top:907px;width:8px;height:2px;background:#86bdb0;"></div>
<div class="b" style="left:1683px;top:904px;width:2px;height:8px;background:#86bdb0;"></div>
</body></html>
